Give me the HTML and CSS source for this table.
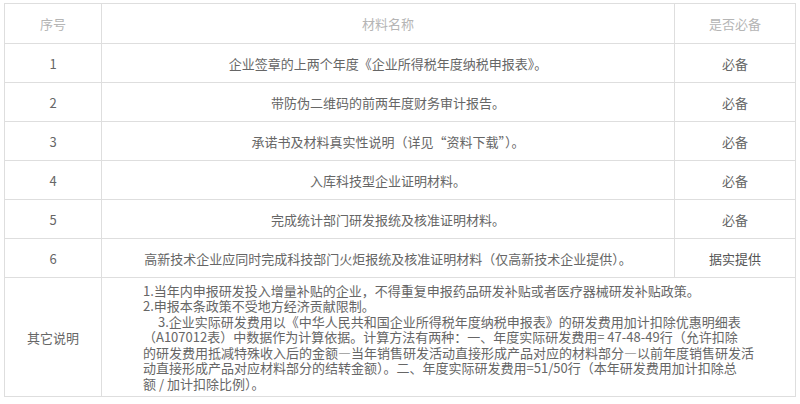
FILE: index.html
```
<!DOCTYPE html>
<html lang="zh-CN">
<head>
  <meta charset="UTF-8">
  <title>申报材料</title>
  <link rel="stylesheet" href="styles.css">
</head>
<body>
  <table class="material-table">
    <thead>
      <tr>
        <th class="col-no">序号</th>
        <th class="col-name">材料名称</th>
        <th class="col-need">是否必备</th>
      </tr>
    </thead>
    <tbody>
      <tr>
        <td>1</td>
        <td>企业签章的上两个年度《企业所得税年度纳税申报表》。</td>
        <td>必备</td>
      </tr>
      <tr>
        <td>2</td>
        <td>带防伪二维码的前两年度财务审计报告。</td>
        <td>必备</td>
      </tr>
      <tr>
        <td>3</td>
        <td>承诺书及材料真实性说明（详见“资料下载”）。</td>
        <td>必备</td>
      </tr>
      <tr>
        <td>4</td>
        <td>入库科技型企业证明材料。</td>
        <td>必备</td>
      </tr>
      <tr>
        <td>5</td>
        <td>完成统计部门研发报统及核准证明材料。</td>
        <td>必备</td>
      </tr>
      <tr>
        <td>6</td>
        <td>高新技术企业应同时完成科技部门火炬报统及核准证明材料（仅高新技术企业提供）。</td>
        <td class="dark">据实提供</td>
      </tr>
      <tr class="notes-row">
        <td>其它说明</td>
        <td colspan="2" class="notes">1.当年内申报研发投入增量补贴的企业，不得重复申报药品研发补贴或者医疗器械研发补贴政策。<br>2.申报本条政策不受地方经济贡献限制。<br><span class="indent">3.企业实际研发费用以《中华人民共和国企业所得税年度纳税申报表》的研发费用加计扣除优惠明细表</span><br>（A107012表）中数据作为计算依据。计算方法有两种：一、年度实际研发费用= 47-48-49行（允许扣除<br>的研发费用抵减特殊收入后的金额—当年销售研发活动直接形成产品对应的材料部分—以前年度销售研发活<br>动直接形成产品对应材料部分的结转金额）。二、年度实际研发费用=51/50行（本年研发费用加计扣除总<br>额 / 加计扣除比例）。</td>
      </tr>
    </tbody>
  </table>
</body>
</html>
```

FILE: styles.css
```
body { margin: 0; padding: 3px 4px 0 4px; background: #fff; font-family: "Noto Sans CJK SC", "Liberation Sans", sans-serif; font-size: 13px; color: #666; }
.material-table { width: 792px; border-collapse: collapse; table-layout: fixed; }
.material-table th, .material-table td { border: 1px solid #dedede; text-align: center; vertical-align: middle; padding: 0; }
.material-table th { height: 39px; font-weight: normal; color: #b5b5b5; }
.material-table td { height: 38px; }
.col-no { width: 96px; }
.col-need { width: 120px; }
.dark { color: #555; }
.notes-row td { height: 116px; }
.material-table td.notes { text-align: left; white-space: nowrap; padding: 1px 10px 1px 41px; line-height: 15.4px; }
.indent { margin-left: 15px; }
```
